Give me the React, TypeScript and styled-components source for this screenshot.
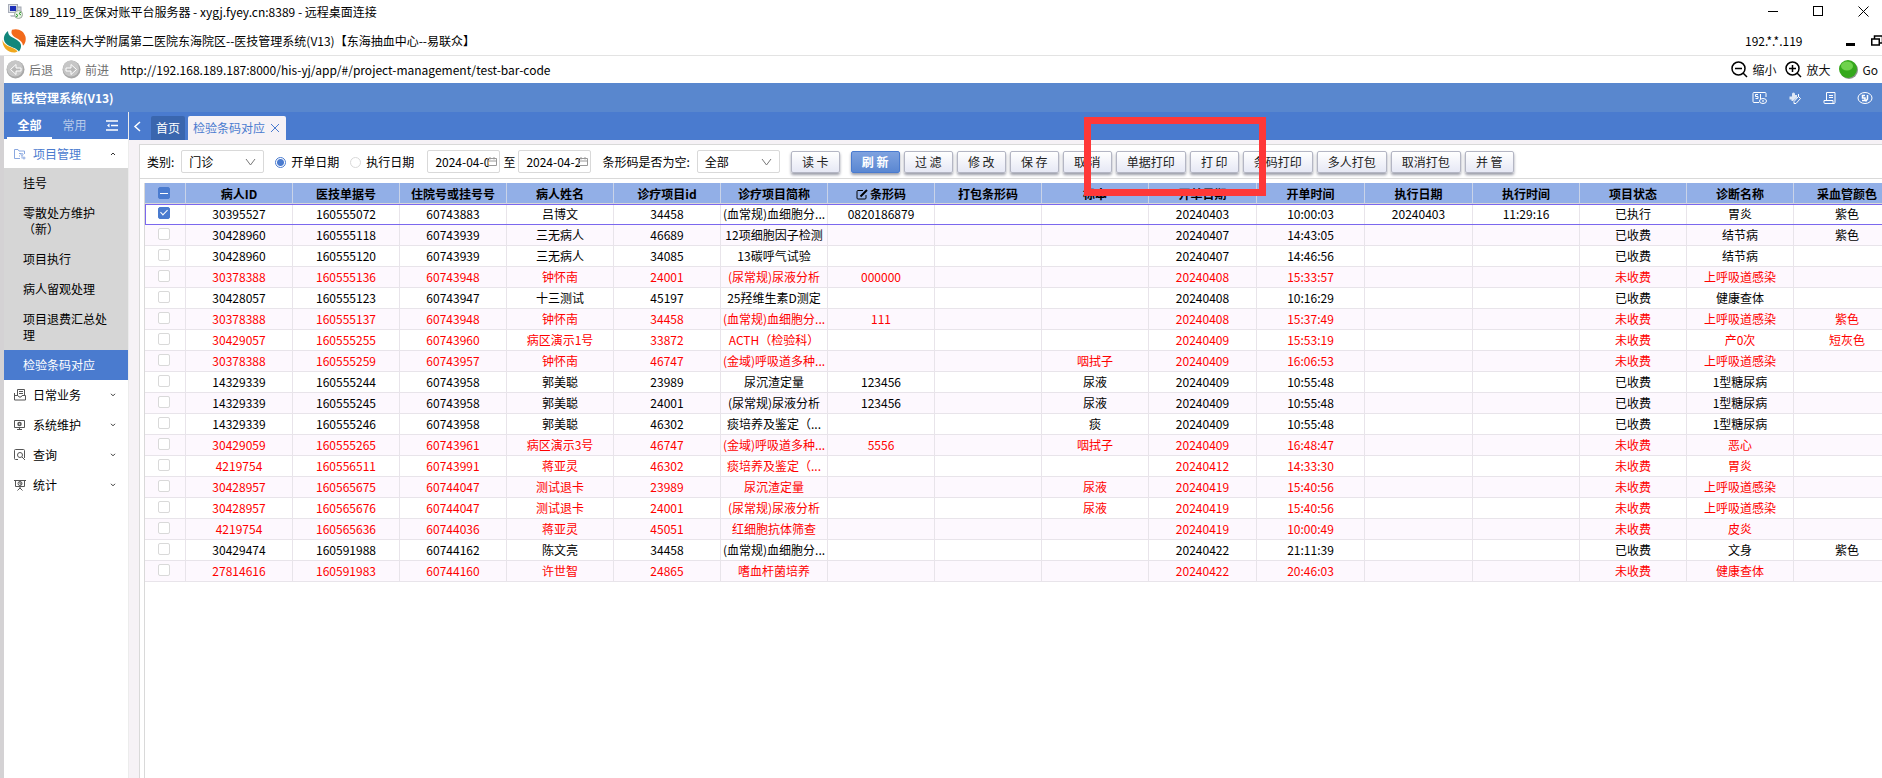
import React, { useState } from 'react';
import styled, { createGlobalStyle, css } from 'styled-components';

const GlobalStyle = createGlobalStyle`
  *, *::before, *::after { box-sizing: border-box; }
  body { margin: 0; background: #fff; overflow: hidden; }
  body, button, input, select {
    font-family: "Noto Sans CJK SC", "Noto Sans", sans-serif;
    font-size: 12px;
    line-height: 16px;
    color: #000;
  }
  button { border: 0; padding: 0; background: none; }
  svg { display: block; flex: none; }
`;

const Page = styled.div`
  min-height: 100vh;
  display: flex;
  flex-direction: column;
  overflow: hidden;
`;

const TitleBar = styled.header`
  display: flex;
  align-items: center;
  height: 27px;
  padding: 0 11px 4px 8px;
  gap: 6px;
`;

const WindowButtons = styled.div`
  display: flex;
  gap: 30px;
  margin-left: auto;
`;

const AppBar = styled.div`
  display: flex;
  align-items: center;
  height: 29px;
  padding: 0 0 0 2px;
  gap: 8px;
  border-bottom: 1px solid #e3e3e3;
`;

const AppBarRight = styled.div`
  display: flex;
  align-items: center;
  margin-left: auto;
  overflow: hidden;
  width: 137px;
  gap: 44px;
`;

const Pair = styled.div`
  display: flex;
  gap: 16px;
  flex: none;
  align-self: center;
`;

const Browser = styled.div`
  flex: 1;
  display: flex;
  flex-direction: column;
  border-left: 4px solid #d4d2d4;
`;

const NavBar = styled.nav`
  display: flex;
  align-items: center;
  height: 27px;
  padding: 0 4px 0 2px;
`;

const NavGroup = styled.div`
  display: flex;
  align-items: center;
  gap: 9px;
`;

const NavButton = styled.button<{ $muted?: boolean }>`
  display: flex;
  align-items: center;
  gap: 4px;
  color: ${p => (p.$muted ? '#707070' : '#111')};
`;

const Address = styled.span`
  flex: 1;
  padding-left: 11px;
`;

const Brand = styled.div`
  display: flex;
  align-items: center;
  justify-content: space-between;
  height: 29px;
  padding: 0 9px 0 7px;
  background: #5987ce;
  color: #fff;
`;

const BrandName = styled.h1`
  margin: 0;
  font-size: 12px;
  font-weight: 700;
`;

const BrandTools = styled.div`
  display: flex;
  gap: 19px;
`;

const ToolButton = styled.button`
  color: #fff;
`;

const Workspace = styled.div`
  flex: 1;
  display: flex;
`;

const Sidebar = styled.aside`
  flex: none;
  width: 125px;
  border-right: 1px solid #ececec;
`;

const SideTabs = styled.div`
  display: flex;
  height: 27px;
  padding-left: 3px;
  background: #4a7bcf;
`;

const SideTab = styled.button<{ $active?: boolean }>`
  width: 45px;
  color: ${p => (p.$active ? '#fff' : '#b9cbea')};
  font-weight: ${p => (p.$active ? 700 : 400)};
  border-bottom: 2px solid ${p => (p.$active ? '#fff' : 'transparent')};
`;

const CollapseButton = styled.button`
  margin-left: 9px;
  color: #fff;
`;

const Group = styled.button<{ $open?: boolean }>`
  display: flex;
  align-items: center;
  width: 100%;
  height: ${p => (p.$open ? 29 : 30)}px;
  padding: 0 12px 0 10px;
  gap: 7px;
  text-align: left;
  color: ${p => (p.$open ? '#4a7bcf' : '#000')};
`;

const GroupName = styled.span`
  flex: 1;
`;

const SubMenu = styled.ul`
  margin: 0;
  padding: 0;
  list-style: none;
  background: #d6d6d6;
`;

const SubLink = styled.a<{ $active?: boolean }>`
  display: block;
  padding: 7px 14px 7px 19px;
  color: ${p => (p.$active ? '#fff' : '#000')};
  background: ${p => (p.$active ? '#4a7bcf' : 'transparent')};
  text-decoration: none;
`;

const Main = styled.main`
  flex: 1;
  min-width: 0;
  display: flex;
  flex-direction: column;
  background: #f6f2f6;
`;

const TabStrip = styled.div`
  display: flex;
  align-items: flex-end;
  height: 28px;
  padding-left: 4px;
  background: #4a7bcf;
  gap: 3px;
`;

const ScrollLeft = styled.button`
  align-self: center;
  width: 15px;
  color: #fff;
`;

const PageTab = styled.button<{ $active?: boolean }>`
  display: flex;
  align-items: center;
  height: 24px;
  gap: 4px;
  padding: 0 5px;
  border-radius: 2px 2px 0 0;
  color: ${p => (p.$active ? '#4a7bcf' : '#fff')};
  background: ${p => (p.$active ? '#f6f2f6' : '#3a66ae')};
`;

const Panel = styled.section`
  flex: 1;
  display: flex;
  flex-direction: column;
  margin: 4px 0 0 10px;
  border: solid #d9d9d9;
  border-width: 1px 0 0 1px;
  background: #fff;
`;

const Filters = styled.form`
  display: flex;
  align-items: center;
  height: 34px;
  padding-left: 7px;
  border-bottom: 1px solid #d9d9d9;
  white-space: nowrap;
`;

const Field = styled.div`
  display: flex;
  align-items: center;
  gap: 7px;
`;

const boxed = css`
  height: 23px;
  border: 1px solid #d9d9d9;
  border-radius: 2px;
  background: #fff;
  outline: 0;
`;

const SelectBox = styled.div`
  position: relative;
  width: 83px;
  color: #777;

  svg {
    position: absolute;
    right: 8px;
    top: 8px;
    pointer-events: none;
  }
`;

const Select = styled.select`
  ${boxed}
  appearance: none;
  display: block;
  width: 100%;
  padding: 0 22px 0 7px;
`;

const RadioLabel = styled.label`
  display: flex;
  align-items: center;
  gap: 5px;
  margin-left: 11px;
`;

const Radio = styled.input`
  appearance: none;
  width: 11px;
  height: 11px;
  margin: 2px 0 0;
  border: 1px solid #d9d9d9;
  border-radius: 50%;
  background: #fff;

  &:checked {
    border-color: #4a7bcf;
    background: radial-gradient(circle, #4a7bcf 3px, #fff 4px);
  }
`;

const Dates = styled.div`
  display: flex;
  align-items: center;
  gap: 3px;
  margin: 0 11px 0 13px;
`;

const DateBox = styled.div`
  position: relative;
  width: 73px;
  color: #999;

  svg {
    position: absolute;
    right: 3px;
    top: 6px;
  }
`;

const DateInput = styled.input`
  ${boxed}
  display: block;
  width: 100%;
  padding: 0 10px 0 7px;
`;

const Actions = styled.div`
  display: flex;
  gap: 4px;
  margin-left: 11px;
`;

const Action = styled.button<{ $primary?: boolean; $wide?: boolean }>`
  flex: none;
  width: ${p => (p.$wide ? 70 : 49)}px;
  height: 22px;
  border: 1px solid ${p => (p.$primary ? '#4a7bcf' : '#b4b6c4')};
  border-radius: 2px;
  box-shadow: 0 2px 3px #9a9ca8;
  color: ${p => (p.$primary ? '#fff' : '#222')};
  font-weight: ${p => (p.$primary ? 700 : 400)};
  background: ${p => (p.$primary
    ? 'linear-gradient(#7ea2df, #5a87d2)'
    : 'linear-gradient(#fff, #e6e8f5)')};
`;

const CardReader = styled(Action)`
  margin-left: 11px;
`;

const GridArea = styled.div`
  flex: 1;
  overflow: hidden;
  margin: 4px 0 0 4px;
  border-left: 1px solid #d9d9d9;
`;

const Grid = styled.table`
  table-layout: fixed;
  width: 100%;
  min-width: 1756px;
  border-collapse: separate;
  border-spacing: 0;
`;

const CheckCol = styled.col`
  width: 41px;
`;

const Col = styled.col<{ $w: number }>`
  width: ${p => p.$w}px;
`;

const Th = styled.th`
  height: 21px;
  padding: 0;
  border-right: 1px solid #c9d3e8;
  border-bottom: 1px solid #d9d9d9;
  background: #92afe7;
  background-clip: padding-box;
  line-height: 19px;

  svg { display: inline-block; vertical-align: -1px; margin-right: 2px; }
`;

const Tr = styled.tr<{ $unpaid: boolean; $current: boolean }>`
  color: ${p => (p.$unpaid ? '#f00' : '#000')};
  background: #fff;
  outline: ${p => (p.$current ? '1px solid #7b68ee' : 'none')};
  outline-offset: -1px;

  &:nth-child(even) { background: #fdf8fe; }

  td {
    height: 21px;
    padding: 0;
    border-right: 1px solid #e8e4ea;
    border-bottom: 1px solid #e8e4ea;
    line-height: 18px;
    text-align: center;
    white-space: nowrap;
  }

  td:first-child {
    padding-top: 3px;
    vertical-align: top;
  }
`;

const Check = styled.input`
  appearance: none;
  display: block;
  width: 12px;
  height: 12px;
  margin: 0 0 0 13px;
  border: 1px solid #d9d9d9;
  border-radius: 2px;
  background: #fff;

  &:checked, &:indeterminate {
    border-color: #4a7bcf;
    background: #4a7bcf;
  }
  &:checked::after {
    content: '';
    display: block;
    width: 4px;
    height: 7px;
    margin: 0 auto;
    border: solid #fff;
    border-width: 0 1px 1px 0;
    transform: rotate(45deg);
  }
  &:indeterminate::after {
    content: '';
    display: block;
    width: 8px;
    height: 1px;
    margin: 5px auto 0;
    background: #fff;
  }
`;

const Marker = styled.div`
  position: absolute;
  left: 1084px;
  top: 117px;
  width: 182px;
  height: 79px;
  border: 7px solid #ff3838;
  pointer-events: none;
`;

/* ---------- icons ---------- */

const RemoteIcon = () => (
  <svg width="15" height="15" viewBox="0 0 15 15">
    <rect x="0.5" y="0.5" width="9" height="8" fill="#dfe3ea" stroke="#a8adb8" />
    <rect x="2" y="2" width="6" height="5" fill="#1c2fb8" />
    <path d="M2 11h6l1 2H3z" fill="#c3c7cf" />
    <rect x="9" y="3" width="4" height="8" fill="#d3d7de" stroke="#a2a7b1" />
    <circle cx="10.5" cy="10.5" r="4" fill="#e9f3e6" stroke="#9aa79a" />
    <path d="M8 10l2 1.5L8 13M13 8l-2 1.5 2 1.500" fill="none" stroke="#2b9a2b" />
  </svg>
);

const LogoIcon = () => (
  <svg width="24" height="24" viewBox="0 0 24 24">
    <path d="M10 .8c6-2 12 1 13.500 7 .8 4-.5 7-2.500 9-.5-7-9-7-11-11.500C9.300 4 9.300 2.500 10 .8z" fill="#f26a1b" />
    <path d="M6 2C1 6 .5 12 5 15.500c4 3 9 3 12 7 3.500-5 2.500-8.500-2-11.500C10.500 8 6 7.500 6 2z" fill="#12877c" />
    <path d="M.5 10.500C0 18 5.500 24 13 23.500c1.200-.2 2-.5 2.500-1-2.500-3.500-7-4-10.500-6C2.500 15 1 13.500.5 10.500z" fill="#f0a81e" />
  </svg>
);

const Ball = ({ flip }: { flip?: boolean }) => (
  <svg width="19" height="19" viewBox="0 0 19 19">
    <circle cx="9.500" cy="9.500" r="9" fill="#a8a8a8" />
    <circle cx="9" cy="8.500" r="8" fill="#c6c6c6" />
    <path
      d={flip ? 'M4 8h5V4.500l5.500 5-5.500 5V11H4z' : 'M15 8h-5V4.500l-5.500 5 5.500 5V11h5z'}
      fill="#b8b8b8" stroke="#fff"
    />
  </svg>
);

const Glass = ({ plus }: { plus?: boolean }) => (
  <svg width="17" height="17" viewBox="0 0 17 17" fill="none" stroke="#000" strokeWidth="1.500">
    <circle cx="7.500" cy="7.500" r="6.500" />
    <path d={plus ? 'M12 12l4 4M4 7.500h7M7.500 4v7' : 'M12 12l4 4M4 7.500h7'} />
  </svg>
);

const GoBall = () => (
  <svg width="19" height="19" viewBox="0 0 19 19">
    <circle cx="10" cy="10" r="9" fill="#8d948d" />
    <circle cx="9" cy="9" r="9" fill="#35a81c" />
    <ellipse cx="8" cy="6" rx="6" ry="4.500" fill="#6fd24c" />
  </svg>
);

const MinIcon = () => (
  <svg width="15" height="15" viewBox="0 0 15 15"><path d="M2 7.500h10" stroke="#000" /></svg>
);
const MaxIcon = () => (
  <svg width="15" height="15" viewBox="0 0 15 15"><rect x="2.500" y="2.500" width="9" height="9" fill="none" stroke="#000" /></svg>
);
const CloseIcon = ({ size = 15 }: { size?: number }) => (
  <svg width={size} height={size} viewBox="0 0 15 15"><path d="M2.500 2.500l10 10M12.500 2.500l-10 10" stroke="currentColor" strokeWidth={15 / size} fill="none" /></svg>
);
const HeavyMinIcon = () => (
  <svg width="9" height="11" viewBox="0 0 9 11"><path d="M0 8.500h9" stroke="#000" strokeWidth="3" /></svg>
);
const RestoreIcon = () => (
  <svg width="12" height="12" viewBox="0 0 12 12" fill="none" stroke="#000">
    <path d="M3.500 4V1h8v7H9" strokeWidth="1.500" />
    <rect x="0.750" y="4" width="7.500" height="6" strokeWidth="1.500" />
  </svg>
);

const CardEyeIcon = () => (
  <svg width="16" height="14" viewBox="0 0 16 14" fill="none" stroke="currentColor">
    <path d="M7 11.500H2a1 1 0 0 1-1-1v-8a1 1 0 0 1 1-1h11a1 1 0 0 1 1 1V6" />
    <path d="M6 3.500H3.500v2H6v2H3.500M8.500 3v5" />
    <ellipse cx="11" cy="10" rx="3.500" ry="2.500" />
    <circle cx="11" cy="10" r="0.500" />
  </svg>
);
const PuzzleIcon = () => (
  <svg width="16" height="14" viewBox="0 0 16 14" fill="currentColor">
    <path d="M2.500 5.500H5V3a1.500 1.500 0 0 1 3 0v1h2v2.500L6 10H4.500V8.500h-2z" opacity="0.8" />
    <path d="M7 10.500l4.500-5 2 2-4.500 5H7z" fill="none" stroke="currentColor" />
    <path d="M11.500 3v3" stroke="currentColor" />
  </svg>
);
const ScrollIcon = () => (
  <svg width="16" height="14" viewBox="0 0 16 14" fill="none" stroke="currentColor">
    <path d="M4.500 9V1.500H13v10a1 1 0 0 1-2 0V9.500H2v2a1 1 0 0 0 1 1h9M7 4.500h4M7 6.500h4" />
  </svg>
);
const RoundIcon = () => (
  <svg width="16" height="14" viewBox="0 0 16 14" fill="none" stroke="currentColor">
    <ellipse cx="8" cy="7" rx="7" ry="5.500" />
    <path d="M8 4.500H5.500v2.500H8v2.500H5M10.500 4v4l-2 2.500" strokeWidth="1.500" />
  </svg>
);

const OutdentIcon = () => (
  <svg width="12" height="11" viewBox="0 0 12 11" fill="none" stroke="currentColor" strokeWidth="1.500">
    <path d="M0 1h12M5 5.500h7M0 10h12" />
    <path d="M3.500 3.500v4L1 5.500z" fill="currentColor" stroke="none" />
  </svg>
);

const Chevron = ({ up }: { up?: boolean }) => (
  <svg width="6" height="4" viewBox="0 0 6 4" fill="none" stroke="#333">
    <path d={up ? 'M1 3L3 1l2 2' : 'M1 .8l2 2 2-2'} />
  </svg>
);
const LeftIcon = () => (
  <svg width="8" height="11" viewBox="0 0 8 11" fill="none" stroke="currentColor" strokeWidth="1.500"><path d="M7 1L2 5.500 7 10" /></svg>
);
const Caret = () => (
  <svg width="11" height="8" viewBox="0 0 11 8" fill="none" stroke="currentColor"><path d="M1 1l4.500 6L10 1" /></svg>
);
const CalendarIcon = () => (
  <svg width="10" height="11" viewBox="0 0 10 11" fill="none" stroke="currentColor">
    <path d="M.5 2.500h9v7h-9zM.5 5h9M3 1v2.500M7 1v2.500" />
  </svg>
);
const EditIcon = () => (
  <svg width="12" height="11" viewBox="0 0 12 11" fill="none" stroke="#000">
    <path d="M7 1.500H2a1 1 0 0 0-1 1V9a1 1 0 0 0 1 1h7a1 1 0 0 0 1-1V6" />
    <path d="M4.500 7.500L11 1" strokeWidth="2" />
  </svg>
);

const FolderIcon = () => (
  <svg width="12" height="12" viewBox="0 0 12 12" fill="none" stroke="#8aa8e0">
    <path d="M6 10.500H.5v-9H4l1 1.500h5.500V6M5 5.500h2M5 8h1" />
    <circle cx="8" cy="6.500" r="1" />
    <circle cx="10" cy="10" r="1" />
    <path d="M8 8v2.500" />
  </svg>
);
const FilesIcon = () => (
  <svg width="12" height="12" viewBox="0 0 12 12" fill="none" stroke="#555">
    <path d="M3.500 6V.5h7V6M.5 4v7h11V6.500H8L7 8H5L4 6.500H1M5 2.500h4M5 4.500h4" />
  </svg>
);
const MonitorIcon = () => (
  <svg width="12" height="12" viewBox="0 0 12 12" fill="none" stroke="#555">
    <path d="M.5 1.500h10v7H.5zM3 10.500h5M5.500 8.500v2" />
    <circle cx="5.500" cy="5" r="1.500" strokeWidth="1.500" />
  </svg>
);
const SearchDocIcon = () => (
  <svg width="12" height="12" viewBox="0 0 12 12" fill="none" stroke="#555">
    <path d="M4 10.500H1.500a1 1 0 0 1-1-1v-8a1 1 0 0 1 1-1h8a1 1 0 0 1 1 1V9M8 8l3 3" />
    <circle cx="6" cy="6" r="2.500" />
  </svg>
);
const BoardIcon = () => (
  <svg width="12" height="12" viewBox="0 0 12 12" fill="none" stroke="#555">
    <path d="M0 1.500h12M1.500 1.500v6h9v-6M6 8v2M3.500 11.500L6 9l2.500 2.500M6 3v2h2" />
    <circle cx="6" cy="4.500" r="2" />
  </svg>
);

/* ---------- data ---------- */

const headers = [
  '病人ID', '医技单据号', '住院号或挂号号', '病人姓名', '诊疗项目id', '诊疗项目简称', '条形码', '打包条形码',
  '标本', '开单日期', '开单时间', '执行日期', '执行时间', '项目状态', '诊断名称', '采血管颜色',
];
const widths = [107, 107, 107, 107, 107, 107, 107, 107, 107, 108, 108, 108, 107, 107, 107, 107];

type Row = string[];
const CBC = '(血常规)血细胞分...';
const URINE = '(尿常规)尿液分析';
const RESP = '(金域)呼吸道多种...';
const SPUTUM = '痰培养及鉴定（...';
const URI = '上呼吸道感染';

const rows: Row[] = [
  ['30395527', '160555072', '60743883', '吕博文', '34458', CBC, '0820186879', '', '', '20240403', '10:00:03', '20240403', '11:29:16', '已执行', '胃炎', '紫色'],
  ['30428960', '160555118', '60743939', '三无病人', '46689', '12项细胞因子检测', '', '', '', '20240407', '14:43:05', '', '', '已收费', '结节病', '紫色'],
  ['30428960', '160555120', '60743939', '三无病人', '34085', '13碳呼气试验', '', '', '', '20240407', '14:46:56', '', '', '已收费', '结节病', ''],
  ['30378388', '160555136', '60743948', '钟怀南', '24001', URINE, '000000', '', '', '20240408', '15:33:57', '', '', '未收费', URI, ''],
  ['30428057', '160555123', '60743947', '十三测试', '45197', '25羟维生素D测定', '', '', '', '20240408', '10:16:29', '', '', '已收费', '健康查体', ''],
  ['30378388', '160555137', '60743948', '钟怀南', '34458', CBC, '111', '', '', '20240408', '15:37:49', '', '', '未收费', URI, '紫色'],
  ['30429057', '160555255', '60743960', '病区演示1号', '33872', 'ACTH（检验科）', '', '', '', '20240409', '15:53:19', '', '', '未收费', '产0次', '短灰色'],
  ['30378388', '160555259', '60743957', '钟怀南', '46747', RESP, '', '', '咽拭子', '20240409', '16:06:53', '', '', '未收费', URI, ''],
  ['14329339', '160555244', '60743958', '郭美聪', '23989', '尿沉渣定量', '123456', '', '尿液', '20240409', '10:55:48', '', '', '已收费', '1型糖尿病', ''],
  ['14329339', '160555245', '60743958', '郭美聪', '24001', URINE, '123456', '', '尿液', '20240409', '10:55:48', '', '', '已收费', '1型糖尿病', ''],
  ['14329339', '160555246', '60743958', '郭美聪', '46302', SPUTUM, '', '', '痰', '20240409', '10:55:48', '', '', '已收费', '1型糖尿病', ''],
  ['30429059', '160555265', '60743961', '病区演示3号', '46747', RESP, '5556', '', '咽拭子', '20240409', '16:48:47', '', '', '未收费', '恶心', ''],
  ['4219754', '160556511', '60743991', '蒋亚灵', '46302', SPUTUM, '', '', '', '20240412', '14:33:30', '', '', '未收费', '胃炎', ''],
  ['30428957', '160565675', '60744047', '测试退卡', '23989', '尿沉渣定量', '', '', '尿液', '20240419', '15:40:56', '', '', '未收费', URI, ''],
  ['30428957', '160565676', '60744047', '测试退卡', '24001', URINE, '', '', '尿液', '20240419', '15:40:56', '', '', '未收费', URI, ''],
  ['4219754', '160565636', '60744036', '蒋亚灵', '45051', '红细胞抗体筛查', '', '', '', '20240419', '10:00:49', '', '', '未收费', '皮炎', ''],
  ['30429474', '160591988', '60744162', '陈文亮', '34458', CBC, '', '', '', '20240422', '21:11:39', '', '', '已收费', '文身', '紫色'],
  ['27814616', '160591983', '60744160', '许世智', '24865', '嗜血杆菌培养', '', '', '', '20240422', '20:46:03', '', '', '未收费', '健康查体', ''],
];

const subItems = ['挂号', '零散处方维护（新）', '项目执行', '病人留观处理', '项目退费汇总处理', '检验条码对应'];
const groups = [
  { name: '日常业务', Icon: FilesIcon },
  { name: '系统维护', Icon: MonitorIcon },
  { name: '查询', Icon: SearchDocIcon },
  { name: '统计', Icon: BoardIcon },
];
const actions = ['刷 新', '过 滤', '修 改', '保 存', '取 消', '单据打印', '打 印', '条码打印', '多人打包', '取消打包', '并 管'];

export default function App() {
  const [checked, setChecked] = useState<number[]>([0]);
  const toggle = (i: number) =>
    setChecked(c => (c.includes(i) ? c.filter(n => n !== i) : [...c, i]));
  const all = checked.length === rows.length;

  return (
    <Page>
      <GlobalStyle />
      <TitleBar>
        <RemoteIcon />
        <span>189_119_医保对账平台服务器 - xygj.fyey.cn:8389 - 远程桌面连接</span>
        <WindowButtons>
          <button aria-label="最小化"><MinIcon /></button>
          <button aria-label="最大化"><MaxIcon /></button>
          <button aria-label="关闭"><CloseIcon /></button>
        </WindowButtons>
      </TitleBar>
      <AppBar>
        <LogoIcon />
        <span>福建医科大学附属第二医院东海院区--医技管理系统(V13)【东海抽血中心--易联众】</span>
        <AppBarRight>
          <span>192.*.*.119</span>
          <Pair>
            <button aria-label="最小化窗口"><HeavyMinIcon /></button>
            <button aria-label="还原窗口"><RestoreIcon /></button>
          </Pair>
        </AppBarRight>
      </AppBar>
      <Browser>
        <NavBar>
          <NavGroup>
            <NavButton $muted><Ball />后退</NavButton>
            <NavButton $muted><Ball flip />前进</NavButton>
          </NavGroup>
          <Address>http://192.168.189.187:8000/his-yj/app/#/project-management/test-bar-code</Address>
          <NavGroup>
            <NavButton><Glass />缩小</NavButton>
            <NavButton><Glass plus />放大</NavButton>
            <NavButton><GoBall />Go</NavButton>
          </NavGroup>
        </NavBar>
        <Brand>
          <BrandName>医技管理系统(V13)</BrandName>
          <BrandTools>
            <ToolButton aria-label="读卡查看"><CardEyeIcon /></ToolButton>
            <ToolButton aria-label="插件"><PuzzleIcon /></ToolButton>
            <ToolButton aria-label="日志"><ScrollIcon /></ToolButton>
            <ToolButton aria-label="社保"><RoundIcon /></ToolButton>
          </BrandTools>
        </Brand>
        <Workspace>
          <Sidebar>
            <SideTabs>
              <SideTab $active>全部</SideTab>
              <SideTab>常用</SideTab>
              <CollapseButton aria-label="收起菜单"><OutdentIcon /></CollapseButton>
            </SideTabs>
            <Group $open>
              <FolderIcon />
              <GroupName>项目管理</GroupName>
              <Chevron up />
            </Group>
            <SubMenu>
              {subItems.map(name => (
                <li key={name}>
                  <SubLink href="#" $active={name === '检验条码对应'}>{name}</SubLink>
                </li>
              ))}
            </SubMenu>
            {groups.map(({ name, Icon }) => (
              <Group key={name}>
                <Icon />
                <GroupName>{name}</GroupName>
                <Chevron />
              </Group>
            ))}
          </Sidebar>
          <Main>
            <TabStrip>
              <ScrollLeft aria-label="向左"><LeftIcon /></ScrollLeft>
              <PageTab>首页</PageTab>
              <PageTab $active>检验条码对应<CloseIcon size={12} /></PageTab>
            </TabStrip>
            <Panel>
              <Filters onSubmit={e => e.preventDefault()}>
                <Field>
                  <label htmlFor="kind">类别:</label>
                  <SelectBox>
                    <Select id="kind"><option>门诊</option><option>住院</option></Select>
                    <Caret />
                  </SelectBox>
                </Field>
                <RadioLabel><Radio type="radio" name="by" defaultChecked />开单日期</RadioLabel>
                <RadioLabel><Radio type="radio" name="by" />执行日期</RadioLabel>
                <Dates>
                  <DateBox>
                    <DateInput aria-label="开始日期" defaultValue="2024-04-03" />
                    <CalendarIcon />
                  </DateBox>
                  <label htmlFor="end">至</label>
                  <DateBox>
                    <DateInput id="end" defaultValue="2024-04-22" />
                    <CalendarIcon />
                  </DateBox>
                </Dates>
                <Field>
                  <label htmlFor="empty">条形码是否为空:</label>
                  <SelectBox>
                    <Select id="empty"><option>全部</option><option>是</option><option>否</option></Select>
                    <Caret />
                  </SelectBox>
                </Field>
                <CardReader type="button">读 卡</CardReader>
                <Actions>
                  {actions.map(a => (
                    <Action key={a} type="button" $primary={a === '刷 新'} $wide={a.length === 4}>{a}</Action>
                  ))}
                </Actions>
              </Filters>
              <GridArea>
                <Grid>
                  <colgroup>
                    <CheckCol />
                    {widths.map((w, i) => <Col key={i} $w={w} />)}
                  </colgroup>
                  <thead>
                    <tr>
                      <Th scope="col">
                        <Check
                          type="checkbox"
                          aria-label="全选"
                          checked={all}
                          ref={el => { if (el) el.indeterminate = checked.length > 0 && !all; }}
                          onChange={() => setChecked(all ? [] : rows.map((_, i) => i))}
                        />
                      </Th>
                      {headers.map(h => (
                        <Th key={h} scope="col">{h === '条形码' && <EditIcon />}{h}</Th>
                      ))}
                    </tr>
                  </thead>
                  <tbody>
                    {rows.map((r, i) => (
                      <Tr key={r[1]} $unpaid={r[13] === '未收费'} $current={i === 0}>
                        <td>
                          <Check
                            type="checkbox"
                            aria-label={`选择 ${r[1]}`}
                            checked={checked.includes(i)}
                            onChange={() => toggle(i)}
                          />
                        </td>
                        {r.map((c, j) => <td key={j}>{c}</td>)}
                      </Tr>
                    ))}
                  </tbody>
                </Grid>
              </GridArea>
            </Panel>
          </Main>
        </Workspace>
      </Browser>
      <Marker />
    </Page>
  );
}
